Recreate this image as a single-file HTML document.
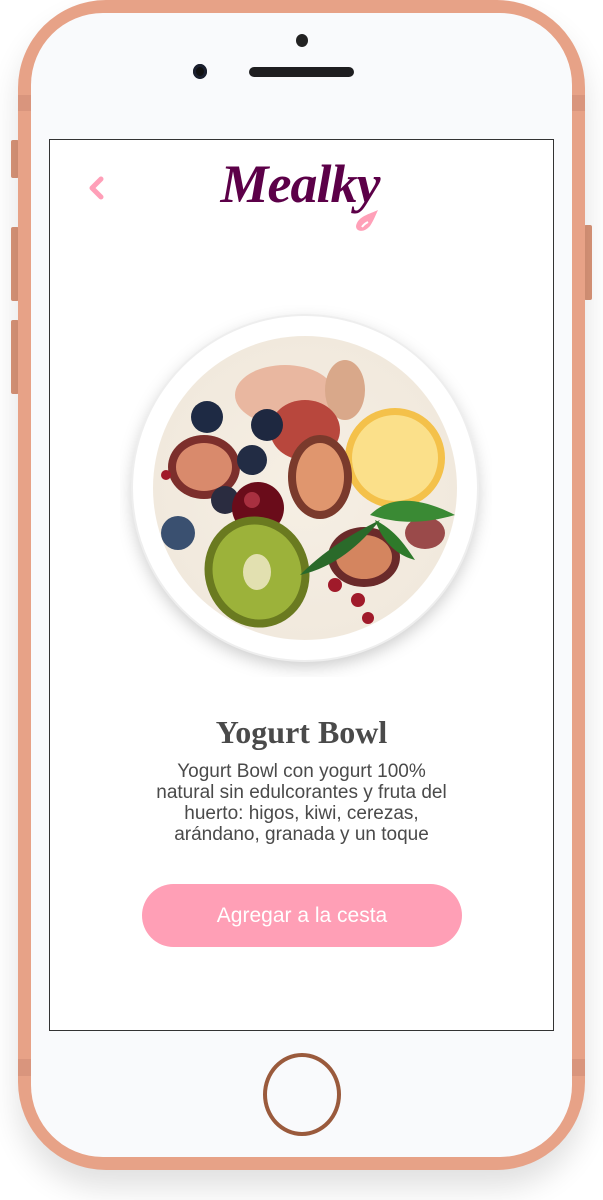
<!DOCTYPE html>
<html><head><meta charset="utf-8"><style>
html,body{margin:0;padding:0;background:#fff;width:603px;height:1200px;overflow:hidden;position:relative;font-family:"Liberation Sans",sans-serif}
.abs{position:absolute}
.frame{left:18px;top:0;width:567px;height:1170px;background:#e7a287;border-radius:88px;box-shadow:0 18px 30px rgba(0,0,0,0.12)}
.inner{left:31px;top:13px;width:541px;height:1144px;background:#f9fafc;border-radius:72px}
.btn-side{background:#d99478;border-radius:2px}
.screen{left:49px;top:139px;width:503px;height:890px;background:#fff;border:1px solid #333}
</style></head><body>
<div class="abs btn-side" style="left:11px;top:140px;width:8px;height:38px"></div>
<div class="abs btn-side" style="left:11px;top:227px;width:8px;height:74px"></div>
<div class="abs btn-side" style="left:11px;top:320px;width:8px;height:74px"></div>
<div class="abs btn-side" style="left:584px;top:225px;width:8px;height:75px"></div>
<div class="abs frame"></div>
<div class="abs" style="left:18px;top:95px;width:13px;height:16px;background:#d9957d"></div>
<div class="abs" style="left:572px;top:95px;width:13px;height:16px;background:#d9957d"></div>
<div class="abs" style="left:18px;top:1059px;width:13px;height:17px;background:#d9957d"></div>
<div class="abs" style="left:572px;top:1059px;width:13px;height:17px;background:#d9957d"></div>
<div class="abs inner"></div>
<div class="abs" style="left:296px;top:34px;width:12px;height:13px;border-radius:50%;background:#222"></div>
<div class="abs" style="left:193px;top:64px;width:14px;height:15px;border-radius:50%;background:#111;box-shadow:inset 0 0 0 3px #1a1f2e"></div>
<div class="abs" style="left:249px;top:67px;width:105px;height:10px;border-radius:5px;background:#1e1e20"></div>
<div class="abs" style="left:263px;top:1053px;width:70px;height:75px;border-radius:50%;border:4px solid #9a5a3c"></div>
<div class="abs screen"></div>
<svg class="abs" style="left:86px;top:176px" width="20" height="26" viewBox="0 0 20 26"><path d="M15 3 L6 12 L15 21" stroke="#ff9fb8" stroke-width="5" fill="none" stroke-linecap="round" stroke-linejoin="round"/></svg>
<div class="abs" style="left:170px;top:152px;width:260px;text-align:center;font-family:'Liberation Serif',serif;font-style:italic;font-weight:bold;font-size:54px;line-height:64px;color:#5c0048;letter-spacing:-1px">Mealky</div>
<svg class="abs" style="left:352px;top:208px" width="30" height="26" viewBox="0 0 30 26"><path d="M26 2 C18 6 6 8 4 18 C4 24 12 25 18 18 C22 12 24 6 26 2Z" fill="#ffa0b8"/><path d="M10 19 C12 16 14 15 16 14" stroke="#fff" stroke-width="2" fill="none"/></svg>
<svg class="abs" style="left:120px;top:305px" width="372" height="372" viewBox="0 0 372 372">
<defs><filter id="s" x="-20%" y="-20%" width="140%" height="140%"><feDropShadow dx="0" dy="6" stdDeviation="8" flood-color="#000" flood-opacity="0.2"/></filter>
<radialGradient id="y" cx="50%" cy="50%" r="50%"><stop offset="0" stop-color="#f6efe4"/><stop offset="1" stop-color="#f1e9dd"/></radialGradient></defs>
<circle cx="185" cy="183" r="173" fill="#fff" filter="url(#s)"/>
<circle cx="185" cy="183" r="173" fill="none" stroke="#eee" stroke-width="2"/>
<circle cx="185" cy="183" r="152" fill="url(#y)"/>
<ellipse cx="165" cy="90" rx="50" ry="30" fill="#e9b7a0"/>
<ellipse cx="225" cy="85" rx="20" ry="30" fill="#d9a88a"/>
<ellipse cx="185" cy="125" rx="35" ry="30" fill="#b8473d"/>
<circle cx="275" cy="153" r="50" fill="#f4c14a"/><circle cx="275" cy="153" r="43" fill="#fbe08a"/>
<ellipse cx="84" cy="162" rx="36" ry="32" fill="#7c2f2c"/><ellipse cx="84" cy="162" rx="28" ry="24" fill="#d98a6c"/>
<ellipse cx="200" cy="172" rx="32" ry="42" fill="#7a3a2c"/><ellipse cx="200" cy="172" rx="24" ry="34" fill="#e0966e"/>
<circle cx="87" cy="112" r="16" fill="#1e2a44"/>
<circle cx="147" cy="120" r="16" fill="#1e2840"/>
<circle cx="132" cy="155" r="15" fill="#222c44"/>
<circle cx="105" cy="195" r="14" fill="#2a2c40"/>
<circle cx="58" cy="228" r="17" fill="#3a5070"/>
<circle cx="138" cy="203" r="26" fill="#6a0c1a"/><circle cx="132" cy="195" r="8" fill="#a83040"/>
<ellipse cx="137" cy="267" rx="52" ry="56" fill="#6a7a20" transform="rotate(-20 137 267)"/>
<ellipse cx="137" cy="267" rx="44" ry="48" fill="#9cb23a" transform="rotate(-20 137 267)"/>
<ellipse cx="137" cy="267" rx="14" ry="18" fill="#e2e0b0"/>
<ellipse cx="244" cy="252" rx="36" ry="30" fill="#6a2a2a"/><ellipse cx="244" cy="252" rx="28" ry="22" fill="#d4855f"/>
<ellipse cx="305" cy="228" rx="20" ry="16" fill="#9a4a4a"/>
<path d="M180 270 C210 240 240 225 260 215 C240 240 215 262 180 270Z" fill="#2a6a2a"/>
<path d="M250 210 C270 190 300 192 335 210 C300 220 275 218 250 210Z" fill="#3a8a34"/>
<path d="M255 215 C275 225 285 240 295 255 C275 250 262 235 255 215Z" fill="#2e7a2a"/>
<circle cx="215" cy="280" r="7" fill="#a01a2a"/><circle cx="238" cy="295" r="7" fill="#a01a2a"/><circle cx="248" cy="313" r="6" fill="#a01a2a"/><circle cx="46" cy="170" r="5" fill="#a01a2a"/>
</svg>
<div class="abs" style="left:100px;top:714px;width:403px;text-align:center;font-family:'Liberation Serif',serif;font-weight:bold;font-size:32px;color:#4a4a4a">Yogurt Bowl</div>
<div class="abs" style="left:110px;top:761px;width:383px;text-align:center;font-size:19px;line-height:21px;color:#4a4a4a">Yogurt Bowl con yogurt 100%<br>natural sin edulcorantes y fruta del<br>huerto: higos, kiwi, cerezas,<br>arándano, granada y un toque</div>
<div class="abs" style="left:142px;top:884px;width:320px;height:63px;border-radius:32px;background:#ff9fb6;color:#fff;font-size:21px;line-height:63px;text-align:center">Agregar a la cesta</div>
</body></html>
